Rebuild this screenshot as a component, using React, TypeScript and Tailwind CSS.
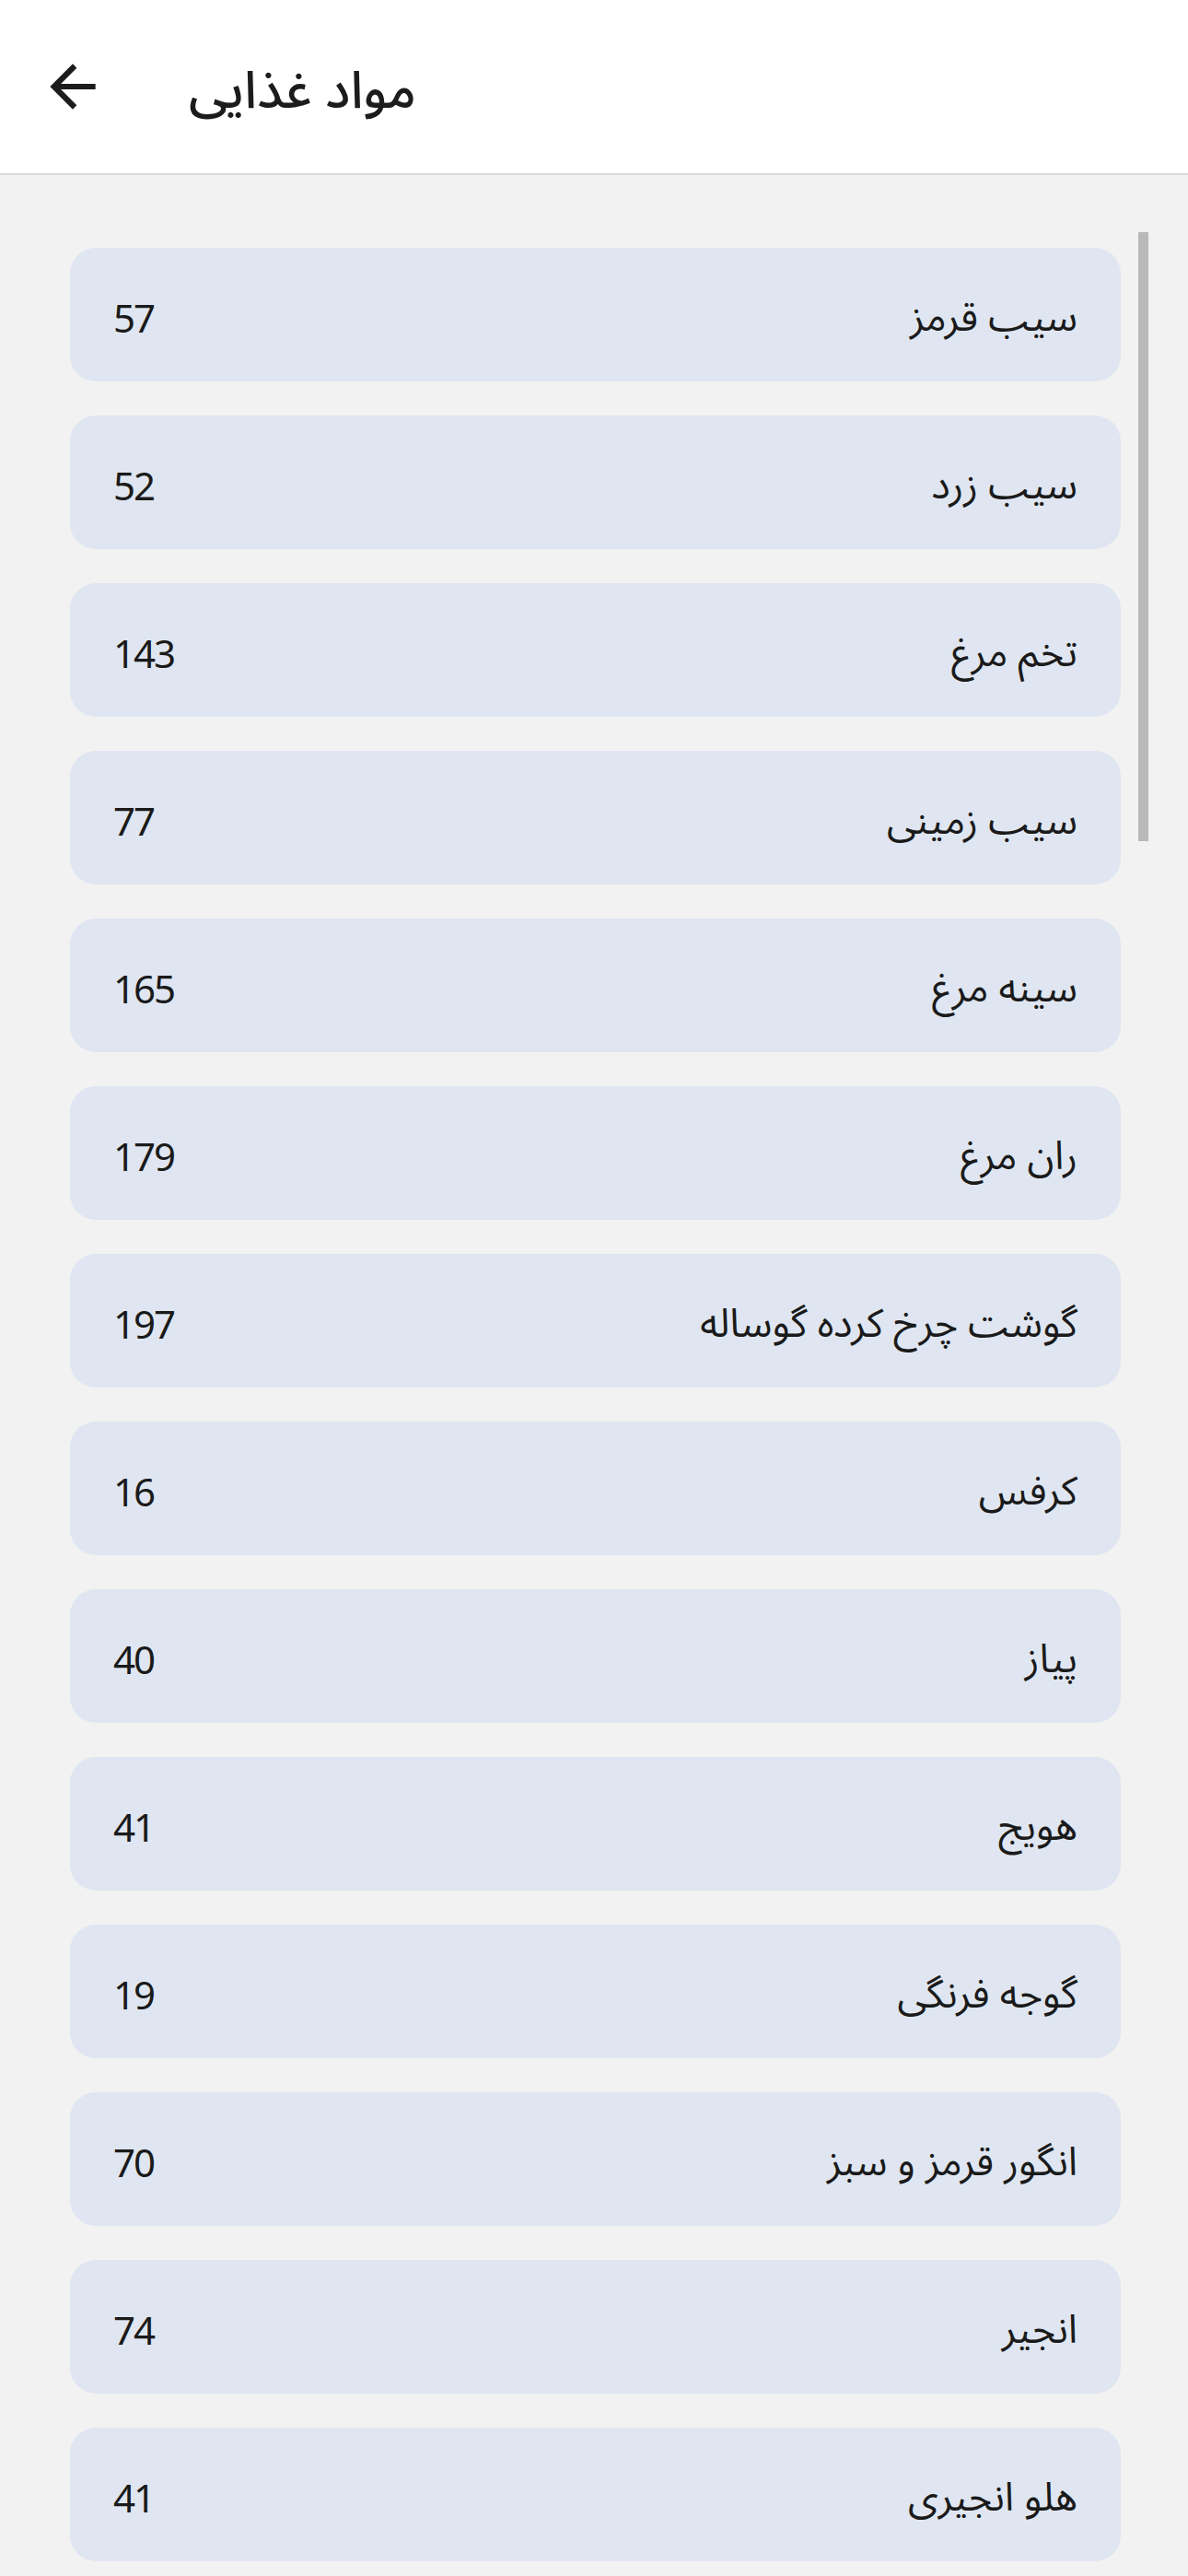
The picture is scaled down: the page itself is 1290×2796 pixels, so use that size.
const foods = [
    { name: 'سیب قرمز', kcal: 57 },
    { name: 'سیب زرد', kcal: 52 },
    { name: 'تخم مرغ', kcal: 143 },
    { name: 'سیب زمینی', kcal: 77 },
    { name: 'سینه مرغ', kcal: 165 },
    { name: 'ران مرغ', kcal: 179 },
    { name: 'گوشت چرخ کرده گوساله', kcal: 197 },
    { name: 'کرفس', kcal: 16 },
    { name: 'پیاز', kcal: 40 },
    { name: 'هویج', kcal: 41 },
    { name: 'گوجه فرنگی', kcal: 19 },
    { name: 'انگور قرمز و سبز', kcal: 70 },
    { name: 'انجیر', kcal: 74 },
    { name: 'هلو انجیری', kcal: 41 }
]

function BackArrow() {
    return (
        <svg width="74" height="74" viewBox="0 0 24 24" fill="#1c1c1c">
            <path d="M20 11H7.83l5.59-5.59L12 4l-8 8 8 8 1.41-1.41L7.83 13H20v-2z" />
        </svg>
    )
}

export default function App() {
    return (
        <div
            className="h-[2796px] w-[1290px] overflow-hidden bg-[#f2f2f2] text-[#1a1a1a]"
            style={{ fontFamily: '"Noto Sans Arabic", "Noto Sans", "DejaVu Sans", sans-serif' }}
        >
            <header className="flex h-[190px] items-center border-b-2 border-[#dadada] bg-white">
                <div className="ml-[42px] flex h-[74px] w-[74px] items-center justify-center">
                    <BackArrow />
                </div>
                <h1 className="ml-[89px] pt-[10px] text-[56px] font-medium leading-none text-[#1c1c1c]" dir="rtl">
                    مواد غذایی
                </h1>
            </header>
            <main className="relative pt-[79px]">
                <div className="absolute right-[43px] top-[62px] h-[661px] w-[11px] bg-[#b9b9b9]"></div>
                <ul className="ml-[76px] mr-[73px] flex flex-col gap-[37px]">
                    {foods.map(food => (
                        <li
                            key={food.name}
                            dir="rtl"
                            className="flex h-[145px] items-center justify-between rounded-[28px] bg-[#dfe6f1] px-[47px] pt-[7px]"
                        >
                            <span className="text-[43px] leading-none">{food.name}</span>
                            <span
                                className="text-[42px] leading-none tracking-[-2px]"
                                style={{ fontFamily: '"Noto Sans", sans-serif' }}
                            >
                                {food.kcal}
                            </span>
                        </li>
                    ))}
                </ul>
            </main>
        </div>
    )
}
